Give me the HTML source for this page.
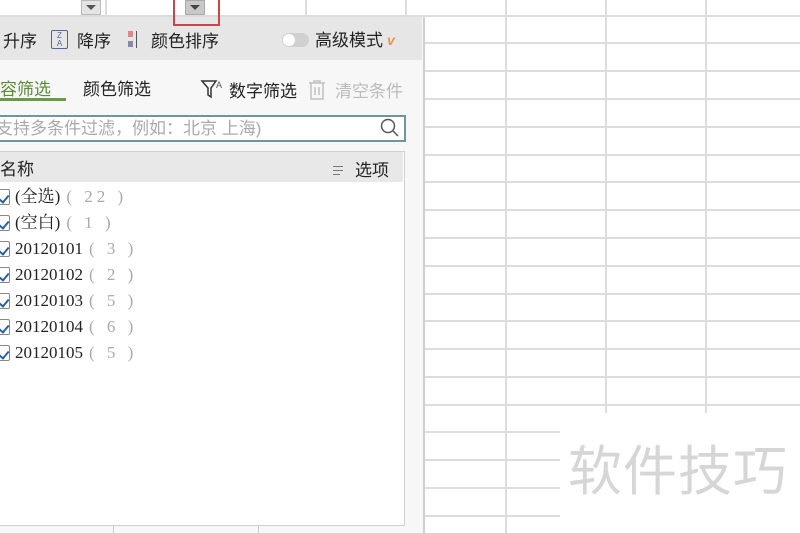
<!DOCTYPE html>
<html><head><meta charset="utf-8"><style>
*{margin:0;padding:0;box-sizing:border-box}
body{width:800px;height:533px;overflow:hidden;background:#fff;position:relative;font-family:"Liberation Sans","Noto Sans CJK SC",sans-serif;color:#222}
.a{position:absolute}
.h{position:absolute;height:2px;background:#dcdcdc}
.v{position:absolute;width:2px;background:#dcdcdc}
.t{position:absolute;font-size:17px;white-space:nowrap;line-height:20px}
.cb{position:absolute;left:-4px;width:14px;height:16px;border:1px solid #888;background:#fff;border-radius:2px}
.cb:after{content:"";position:absolute;left:4px;top:3px;width:4px;height:8px;border-right:2px solid #2b5f9e;border-bottom:2px solid #2b5f9e;transform:rotate(40deg)}
.it{position:absolute;left:15px;font-family:"Liberation Serif","Noto Serif CJK SC",serif;font-size:17px;line-height:20px;white-space:nowrap}
.it span{color:#aaa;letter-spacing:4px;margin-left:6px}
</style></head><body>
<div class="h" style="left:0;top:15px;width:800px"></div>
<div class="h" style="left:424px;top:42px;width:376px"></div>
<div class="h" style="left:424px;top:70px;width:376px"></div>
<div class="h" style="left:424px;top:98px;width:376px"></div>
<div class="h" style="left:424px;top:126px;width:376px"></div>
<div class="h" style="left:424px;top:154px;width:376px"></div>
<div class="h" style="left:424px;top:181px;width:376px"></div>
<div class="h" style="left:424px;top:209px;width:376px"></div>
<div class="h" style="left:424px;top:237px;width:376px"></div>
<div class="h" style="left:424px;top:265px;width:376px"></div>
<div class="h" style="left:424px;top:293px;width:376px"></div>
<div class="h" style="left:424px;top:320px;width:376px"></div>
<div class="h" style="left:424px;top:348px;width:376px"></div>
<div class="h" style="left:424px;top:376px;width:376px"></div>
<div class="h" style="left:424px;top:404px;width:376px"></div>
<div class="h" style="left:424px;top:431px;width:136px"></div>
<div class="h" style="left:424px;top:459px;width:136px"></div>
<div class="h" style="left:424px;top:487px;width:136px"></div>
<div class="h" style="left:424px;top:515px;width:136px"></div>
<div class="v" style="left:505px;top:0;height:533px"></div>
<div class="v" style="left:605px;top:0;height:413px"></div>
<div class="v" style="left:705px;top:0;height:413px"></div>
<div class="v" style="left:105px;top:0;height:15px"></div>
<div class="v" style="left:305px;top:0;height:15px"></div>
<div class="v" style="left:405px;top:0;height:15px"></div>
<div class="t" style="left:568px;top:440px;font-size:54px;line-height:64px;color:#d6d6d6;letter-spacing:1px">软件技巧</div>
<div class="a" style="left:81px;top:0;width:20px;height:15px;background:#e4e4e4;border:1px solid #bbb"></div>
<div class="a" style="left:86px;top:5px;border-left:5px solid transparent;border-right:5px solid transparent;border-top:5px solid #555"></div>
<div class="a" style="left:185px;top:0;width:20px;height:15px;background:#c8c8c8;border:1px solid #aaa"></div>
<div class="a" style="left:190px;top:5px;border-left:5px solid transparent;border-right:5px solid transparent;border-top:5px solid #444"></div>
<div class="a" style="left:0;top:17px;width:425px;height:516px;background:#f7f7f7;border-right:2px solid #cfcfcf"></div>
<div class="a" style="left:0;top:17px;width:422px;height:43px;background:#e6e6e6"></div>
<div class="a" style="left:173px;top:0;width:47px;height:26px;border:2px solid #c9454a;border-top:none"></div>
<div class="t" style="left:3px;top:32px">升序</div>
<div class="a" style="left:51px;top:30px;width:17px;height:19px;border:1px solid #4a6aa0;border-radius:2px;font-size:8px;line-height:8px;color:#4a6aa0;text-align:center;padding-top:1px">Z<br>A</div>
<div class="t" style="left:77px;top:32px">降序</div>
<div class="a" style="left:128px;top:31px;width:5px;height:6px;background:#d88"></div>
<div class="a" style="left:128px;top:41px;width:5px;height:6px;background:#88a"></div>
<div class="a" style="left:136px;top:31px;width:1px;height:17px;background:#555"></div>
<div class="t" style="left:151px;top:32px">颜色排序</div>
<div class="a" style="left:282px;top:33px;width:27px;height:14px;border-radius:7px;background:#d0d0d0"></div>
<div class="a" style="left:283px;top:34px;width:12px;height:12px;border-radius:6px;background:#fff"></div>
<div class="t" style="left:315px;top:31px">高级模式</div>
<div class="t" style="left:387px;top:30px;color:#e8954a;font-weight:bold;font-size:14px;font-style:italic">v</div>
<div class="t" style="left:0;top:80px;color:#5d8b3a">容筛选</div>
<div class="a" style="left:0;top:98px;width:66px;height:3px;background:#6a9a47"></div>
<div class="t" style="left:83px;top:80px">颜色筛选</div>
<svg class="a" style="left:200px;top:78px" width="24" height="24" viewBox="0 0 24 24"><path d="M2 3h14l-5 7v9l-3-2v-7z" fill="none" stroke="#333" stroke-width="1.5"/><text x="16" y="10" font-size="9" fill="#555" font-family="Liberation Sans">A</text></svg>
<div class="t" style="left:229px;top:82px">数字筛选</div>
<svg class="a" style="left:307px;top:79px" width="20" height="22" viewBox="0 0 20 22"><path d="M2 4h16M7 4V2h6v2M4 4v16h12V4M8 8v8M12 8v8" fill="none" stroke="#c0c0c0" stroke-width="1.5"/></svg>
<div class="t" style="left:335px;top:82px;color:#bbb">清空条件</div>
<div class="a" style="left:-2px;top:115px;width:408px;height:27px;border:2px solid #6f96a0;background:#fff"></div>
<div class="t" style="left:-4px;top:119px;color:#aaa">支持多条件过滤，例如：北京 上海)</div>
<svg class="a" style="left:380px;top:118px" width="20" height="20" viewBox="0 0 20 20"><circle cx="8" cy="8" r="6.5" fill="none" stroke="#555" stroke-width="1.5"/><path d="M13 13l5 5" stroke="#555" stroke-width="1.5"/></svg>
<div class="a" style="left:-2px;top:151px;width:407px;height:375px;border:1px solid #d0d0d0;background:#fff"></div>
<div class="a" style="left:0;top:152px;width:403px;height:30px;background:#e8e8e8"></div>
<div class="t" style="left:0;top:160px">名称</div>
<div class="a" style="left:333px;top:166px;width:10px;height:1px;background:#777"></div>
<div class="a" style="left:333px;top:170px;width:10px;height:1px;background:#777"></div>
<div class="a" style="left:333px;top:174px;width:7px;height:1px;background:#777"></div>
<div class="t" style="left:355px;top:161px">选项</div>
<div class="cb" style="top:189px"></div><div class="it" style="top:187px">(全选)<span>( 22 )</span></div>
<div class="cb" style="top:215px"></div><div class="it" style="top:213px">(空白)<span>( 1 )</span></div>
<div class="cb" style="top:241px"></div><div class="it" style="top:239px">20120101<span>( 3 )</span></div>
<div class="cb" style="top:267px"></div><div class="it" style="top:265px">20120102<span>( 2 )</span></div>
<div class="cb" style="top:293px"></div><div class="it" style="top:291px">20120103<span>( 5 )</span></div>
<div class="cb" style="top:319px"></div><div class="it" style="top:317px">20120104<span>( 6 )</span></div>
<div class="cb" style="top:345px"></div><div class="it" style="top:343px">20120105<span>( 5 )</span></div>
<div class="a" style="left:113px;top:526px;width:1px;height:7px;background:#ccc"></div>
<div class="a" style="left:258px;top:526px;width:1px;height:7px;background:#ccc"></div>
</body></html>
